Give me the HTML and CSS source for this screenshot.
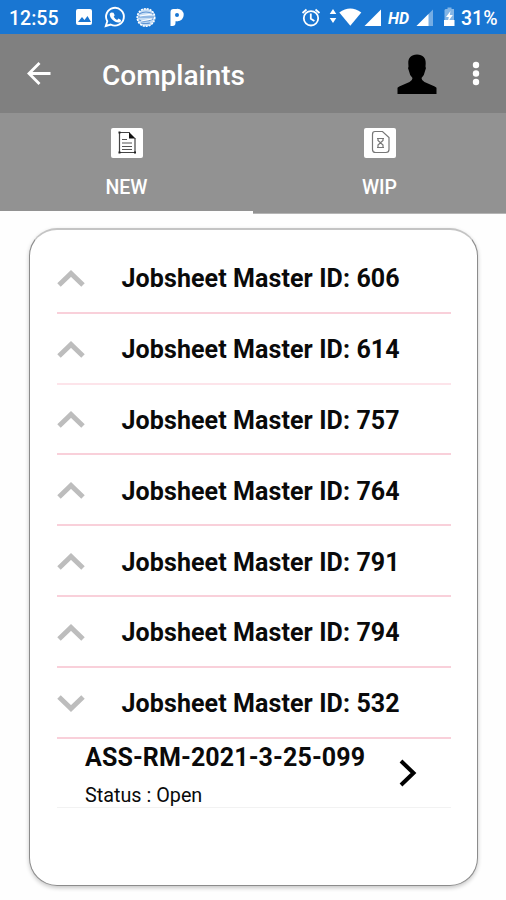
FILE: index.html
```
<!DOCTYPE html>
<html lang="en">
<head>
    <meta charset="UTF-8" />
    <title>Complaints</title>
    <link rel="stylesheet" href="styles.css">
</head>
<body>
    <div class="status-bar">
        <span class="clock">12:55</span>
        <svg class="notifications" width="112" height="34" viewBox="0 0 112 34">
            <rect x="1" y="9" width="16" height="16" rx="2" fill="#fff" />
            <path d="M3 22l4-5 2.500 3 3-4 3.500 6z" fill="#1976d2" />
            <g fill="none" stroke="#fff" stroke-width="1.900">
                <path d="M30.800 26l1.500-4.800a8.900 8.900 0 1 1 3.400 3.300z" />
            </g>
            <path d="M36.500 12.500l2 .2 1.200 2.600-1 1.400q1.300 2.300 3.400 3.200l1.400-1.300 2.500 1.300q.2 2.600-2.700 2.700c-4 0-8.600-4.600-8.600-8 0-1.200.8-1.900 1.800-2.100z" fill="#fff" />
            <circle cx="71" cy="17.500" r="8.800" fill="#c4dcf4" stroke="#fff" stroke-width="1.500" stroke-dasharray="2 1" />
            <path d="M64 14q7-4 14 0M63 17h16M64 20q7 3 14-1M66 23q5 1 9 0" fill="none" stroke="#5f94d4" stroke-width="1.100" />
            <path d="M65 16l12-2M66 21l11-2" stroke="#fff" stroke-width="1.200" />
            <circle cx="102.500" cy="15" r="6.200" fill="#fff" />
            <path d="M95.500 12q0-3 3-3h4v12.200h-2V23q0 3-3 3h-2z" fill="#fff" />
            <circle cx="102" cy="15" r="2" fill="#1976d2" />
        </svg>
        <svg class="signals" width="160" height="34" viewBox="0 0 160 34">
            <g fill="none" stroke="#fff" stroke-width="1.800">
                <circle cx="10" cy="18.300" r="7.200" />
                <path d="M9.800 13.500v5.200l3.600 2.300M1.500 13l4-3.500M18.500 13l-4-3.500" />
            </g>
            <path d="M32 9l3.300 5h-6.600zM32 23l3.300-5h-6.600z" fill="#fff" />
            <path d="M38.300 12.500q11-8 22 0L49.300 25.700z" fill="#fff" />
            <path d="M80 9.500V26H63.500z" fill="#fff" />
            <text class="hd" x="87" y="23.500" textLength="21">HD</text>
            <path d="M132 9.500V26h-16.500z" fill="#75ade4" />
            <path d="M127.500 14V26h-12z" fill="#fff" />
            <path d="M144.500 9h2V7.500h4V9h2.500v11H143.500V10z" fill="#83b5e6" />
            <path d="M143 20H153.500v6h-10.500z" fill="#fff" />
            <path d="M149.500 11l-4.500 6h2.800l-1 5 5-7h-3z" fill="#fff" />
        </svg>
        <span class="battery">31%</span>
    </div>

    <header class="app-bar">
        <svg width="26" height="26" viewBox="0 0 26 26" fill="none" stroke="#fff" stroke-width="2.800">
            <path d="M25.500 12.500H4.500M14.500 2L4 12.500 14.500 23" />
        </svg>
        <h1>Complaints</h1>
        <svg class="profile" width="40" height="40" viewBox="0 0 40 40">
            <path d="M20 .5c6 0 9 3.500 8.700 9l-.2 3q1 1.500-.3 4-.7 4.500-3.700 7.500 0 2.500 3 4l8 3.500q4 1.700 4 2.500V40H.5V34q0-.8 4-2.500l8-3.500q3-1.500 3-4-3-3-3.700-7.500-1.300-2.500-.3-4l-.2-3C11 4 14 .5 20 .5z" />
        </svg>
        <svg class="more" width="8" height="26" viewBox="0 0 8 26" fill="#fff">
            <circle cx="4" cy="4" r="3.200" />
            <circle cx="4" cy="12.500" r="3.200" />
            <circle cx="4" cy="21" r="3.200" />
        </svg>
    </header>

    <nav class="tabs">
        <div class="tab active">
            <svg width="32" height="30" viewBox="0 0 32 30">
                <rect width="32" height="30" rx="2" fill="#fff" />
                <path d="M18.500 4.500H8.500v20h15.500V10" fill="none" stroke="#444" stroke-width="1.200" />
                <path d="M18 4l6.500 6.500H18z" fill="#111" />
                <path d="M11 11.500h5M11 15h10M11 18.500h10M11 21.500h10" stroke="#555" stroke-width="1.200" />
                <path d="M7.500 3.500h2v2h-2zM7.500 23.500h2v2h-2zM23 23.500h2v2h-2z" fill="#222" />
            </svg>
            <span>NEW</span>
        </div>
        <div class="tab">
            <svg width="32" height="30" viewBox="0 0 32 30" fill="none" stroke="#777" stroke-width="1.200">
                <rect width="32" height="30" rx="2" fill="#fff" stroke="none" />
                <path d="M11 3.500h7.500L25 9.500v12q0 3-3 3H11.500q-3 0-3-3v-15q0-3 2.500-3z" />
                <path d="M13 10.500h7M13 19.500h7M14 10.500v2l5 4.500v2.500M19 10.500v2L14 17v2.500" />
            </svg>
            <span>WIP</span>
        </div>
    </nav>

    <main class="card">
        <div class="row">
            <svg class="chevron" viewBox="0 0 28 18"><path d="M2 15L14 3.500 26 15" /></svg>
            <span>Jobsheet Master ID: 606</span>
        </div>
        <div class="row light">
            <svg class="chevron" viewBox="0 0 28 18"><path d="M2 15L14 3.500 26 15" /></svg>
            <span>Jobsheet Master ID: 614</span>
        </div>
        <div class="row">
            <svg class="chevron" viewBox="0 0 28 18"><path d="M2 15L14 3.500 26 15" /></svg>
            <span>Jobsheet Master ID: 757</span>
        </div>
        <div class="row">
            <svg class="chevron" viewBox="0 0 28 18"><path d="M2 15L14 3.500 26 15" /></svg>
            <span>Jobsheet Master ID: 764</span>
        </div>
        <div class="row">
            <svg class="chevron" viewBox="0 0 28 18"><path d="M2 15L14 3.500 26 15" /></svg>
            <span>Jobsheet Master ID: 791</span>
        </div>
        <div class="row">
            <svg class="chevron" viewBox="0 0 28 18"><path d="M2 15L14 3.500 26 15" /></svg>
            <span>Jobsheet Master ID: 794</span>
        </div>
        <div class="row">
            <svg class="chevron" viewBox="0 0 28 18"><path d="M2 2L14 13.500 26 2" /></svg>
            <span>Jobsheet Master ID: 532</span>
        </div>
        <div class="complaint">
            <div class="details">
                <div class="number">ASS-RM-2021-3-25-099</div>
                <div class="status">Status : Open</div>
            </div>
            <svg width="18" height="28" viewBox="0 0 18 28" fill="none" stroke="#000" stroke-width="4">
                <path d="M2 2L14.500 14 2 26" />
            </svg>
        </div>
    </main>
</body>
</html>
```
FILE: styles.css
```
body {
    font-family: Roboto, "Liberation Sans", sans-serif;
    background-color: #fefefe;
    margin: 0;
    height: 900px;
    overflow: hidden;
}

svg {
    display: block;
    flex: none;
}

.status-bar {
    display: flex;
    align-items: center;
    box-sizing: border-box;
    height: 34px;
    padding-left: 9px;
    background: #1976d2;
    color: #fff;
    font-size: 19.5px;
    font-weight: 500;
    white-space: nowrap;
}

.clock {
    width: 66px;
    padding-top: 2px;
}

.notifications {
    margin-right: 114px;
}

.battery {
    padding-top: 2px;
}

.hd {
    fill: #fff;
    font-size: 16px;
    font-style: italic;
    font-weight: 700;
}

.app-bar {
    display: flex;
    align-items: center;
    box-sizing: border-box;
    height: 79px;
    padding: 0 26px 0 25px;
    background: #808080;
}

    .app-bar h1 {
        margin: 3px 0 0 51px;
        width: 295px;
        color: #fff;
        font-size: 28px;
        font-weight: 500;
    }

.more {
    margin-left: 35px;
}

.tabs {
    display: flex;
    height: 101px;
    background: #929292;
}

.tab {
    display: flex;
    flex-direction: column;
    align-items: center;
    flex: 1;
    box-sizing: border-box;
    padding-top: 15px;
    border-bottom: 1px solid #b5b5b5;
    color: #fff;
    font-size: 19.5px;
    font-weight: 500;
}

    .tab.active {
        border-bottom: 3px solid #fefefe;
    }

    .tab span {
        margin-top: 18px;
    }

.card {
    box-sizing: border-box;
    width: 449px;
    height: 658px;
    margin: 14px 0 0 29px;
    padding: 13px 26px 0 27px;
    border: 1px solid #8c8c8c;
    border-top: 2px solid #c4c4c4;
    border-radius: 28px;
    background: #fff;
    box-shadow: 0 2px 4px rgba(0,0,0,0.22);
}

.row {
    display: flex;
    align-items: center;
    box-sizing: border-box;
    height: 70.8px;
    padding-top: 3px;
    border-bottom: 2px solid #f9d0da;
    color: #0a0a0a;
    font-size: 25px;
    font-weight: 700;
    letter-spacing: 0.1px;
    white-space: nowrap;
}

    .row.light {
        border-bottom-color: #fde4ea;
    }

.chevron {
    width: 28px;
    height: 18px;
    margin-right: 36.5px;
    fill: none;
    stroke: #bdbdbd;
    stroke-width: 5;
}

.complaint {
    display: flex;
    align-items: center;
    box-sizing: border-box;
    height: 69px;
    padding-left: 28px;
    border-bottom: 1px solid #f2f2f2;
    color: #0a0a0a;
}

.details {
    width: 314px;
    padding-top: 4px;
    white-space: nowrap;
}

.number {
    font-size: 25px;
    font-weight: 700;
    letter-spacing: 0.1px;
}

.status {
    margin-top: 12px;
    font-size: 19.8px;
    line-height: 23px;
}
```
